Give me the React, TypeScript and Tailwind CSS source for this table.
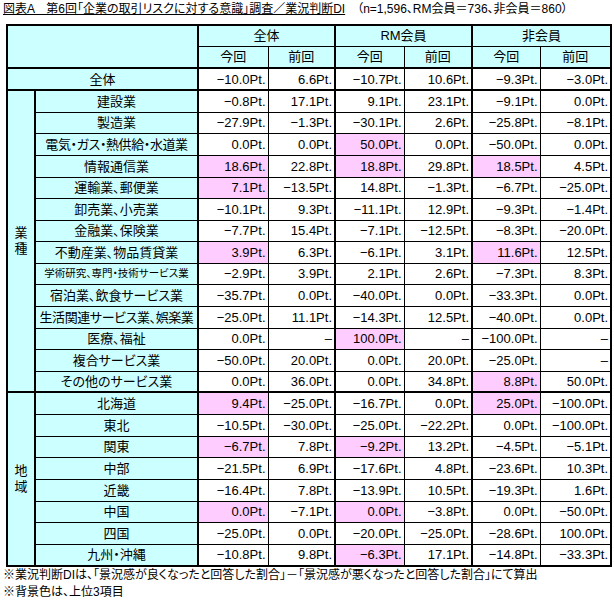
import React from "react";

type Row = { label: string; v: string[]; hl?: number[]; small?: boolean; tight?: boolean };

const industries: Row[] = [
  { label: "建設業", v: ["-0.8", "17.1", "9.1", "23.1", "-9.1", "0.0"] },
  { label: "製造業", v: ["-27.9", "-1.3", "-30.1", "2.6", "-25.8", "-8.1"] },
  { label: "電気・ガス・熱供給・水道業", v: ["0.0", "0.0", "50.0", "0.0", "-50.0", "0.0"], hl: [2], tight: true },
  { label: "情報通信業", v: ["18.6", "22.8", "18.8", "29.8", "18.5", "4.5"], hl: [0, 2, 4] },
  { label: "運輸業、郵便業", v: ["7.1", "-13.5", "14.8", "-1.3", "-6.7", "-25.0"], hl: [0] },
  { label: "卸売業、小売業", v: ["-10.1", "9.3", "-11.1", "12.9", "-9.3", "-1.4"] },
  { label: "金融業、保険業", v: ["-7.7", "15.4", "-7.1", "-12.5", "-8.3", "-20.0"] },
  { label: "不動産業、物品賃貸業", v: ["3.9", "6.3", "-6.1", "3.1", "11.6", "12.5"], hl: [0, 4] },
  { label: "学術研究、専門・技術サービス業", v: ["-2.9", "3.9", "2.1", "2.6", "-7.3", "8.3"], small: true },
  { label: "宿泊業、飲食サービス業", v: ["-35.7", "0.0", "-40.0", "0.0", "-33.3", "0.0"] },
  { label: "生活関連サービス業、娯楽業", v: ["-25.0", "11.1", "-14.3", "12.5", "-40.0", "0.0"], tight: true },
  { label: "医療、福祉", v: ["0.0", "", "100.0", "", "-100.0", ""], hl: [2] },
  { label: "複合サービス業", v: ["-50.0", "20.0", "0.0", "20.0", "-25.0", ""] },
  { label: "その他のサービス業", v: ["0.0", "36.0", "0.0", "34.8", "8.8", "50.0"], hl: [4] },
];

const regions: Row[] = [
  { label: "北海道", v: ["9.4", "-25.0", "-16.7", "0.0", "25.0", "-100.0"], hl: [0, 4] },
  { label: "東北", v: ["-10.5", "-30.0", "-25.0", "-22.2", "0.0", "-100.0"] },
  { label: "関東", v: ["-6.7", "7.8", "-9.2", "13.2", "-4.5", "-5.1"], hl: [0, 2] },
  { label: "中部", v: ["-21.5", "6.9", "-17.6", "4.8", "-23.6", "10.3"] },
  { label: "近畿", v: ["-16.4", "7.8", "-13.9", "10.5", "-19.3", "1.6"] },
  { label: "中国", v: ["0.0", "-7.1", "0.0", "-3.8", "0.0", "-50.0"], hl: [0, 2] },
  { label: "四国", v: ["-25.0", "0.0", "-20.0", "-25.0", "-28.6", "100.0"] },
  { label: "九州・沖縄", v: ["-10.8", "9.8", "-6.3", "17.1", "-14.8", "-33.3"], hl: [2] },
];

const totalRow = ["-10.0", "6.6", "-10.7", "10.6", "-9.3", "-3.0"];

// row heights, px: industry 302 total, region 174 total
const indH = ["h-[22px]", "h-[21px]", "h-[22px]", "h-[22px]", "h-[21px]", "h-[22px]", "h-[21px]", "h-[22px]", "h-[21px]", "h-[22px]", "h-[22px]", "h-[21px]", "h-[22px]", "h-[21px]"];
const regH = ["h-[22px]", "h-[22px]", "h-[21px]", "h-[22px]", "h-[22px]", "h-[21px]", "h-[22px]", "h-[22px]"];

const fmt = (s: string) => (s === "" ? "–" : s.replace("-", "−") + "Pt.");

function Values({ v, hl = [] }: { v: string[]; hl?: number[] }) {
  return (
    <>
      {v.map((s, i) => (
        <td
          key={i}
          className={
            "border border-black text-right pr-[2px] " +
            (i % 2 === 0 ? "border-l-2 " : "") +
            (hl.includes(i) ? "bg-[#ffccff]" : "bg-white")
          }
        >
          {fmt(s)}
        </td>
      ))}
    </>
  );
}

export default function App() {
  return (
    <div className="w-[614px] h-[601px] bg-white text-black font-['Liberation_Sans','Noto_Sans_CJK_JP',sans-serif] [font-feature-settings:'palt'] overflow-hidden">
      <div className="h-[24px] pl-[3px] pt-[1px] text-[12px] leading-[17px] whitespace-nowrap">
        <span className="underline">図表A　第6回「企業の取引リスクに対する意識」調査／業況判断DI</span>
        <span>　（n=1,596、RM会員＝736、非会員＝860）</span>
      </div>

      <table className="ml-[6px] table-fixed border-collapse border-2 border-black text-[13px] leading-none w-[604px]">
        <colgroup>
          <col className="w-[28px]" />
          <col className="w-[163px]" />
          <col className="w-[70px]" />
          <col className="w-[67px]" />
          <col className="w-[69px]" />
          <col className="w-[68px]" />
          <col className="w-[68px]" />
          <col className="w-[71px]" />
        </colgroup>
        <thead>
          <tr className="h-[21px]">
            <th colSpan={2} rowSpan={2} className="bg-[#ccffff] border border-black border-b-2" />
            {["全体", "RM会員", "非会員"].map((h) => (
              <th key={h} colSpan={2} className="bg-[#ccffff] border border-black border-l-2 font-normal">
                {h}
              </th>
            ))}
          </tr>
          <tr className="h-[22px]">
            {[0, 1, 2].map((g) => (
              <React.Fragment key={g}>
                <th className="bg-[#ccffff] border border-black border-l-2 border-b-2 font-normal">今回</th>
                <th className="bg-[#ccffff] border border-black border-b-2 font-normal">前回</th>
              </React.Fragment>
            ))}
          </tr>
        </thead>
        <tbody>
          <tr className="h-[22px] border-b-2 border-black">
            <td colSpan={2} className="bg-[#ccffff] border border-black border-b-2 text-center">
              全体
            </td>
            <Values v={totalRow} />
          </tr>
          {industries.map((r, i) => (
            <tr key={r.label} className={indH[i] + (i === industries.length - 1 ? " border-b-2 border-black" : "")}>
              {i === 0 && (
                <td rowSpan={industries.length} className="bg-[#ccffff] border border-black border-r-2 border-b-2 text-center align-middle leading-[16px]">
                  業<br />種
                </td>
              )}
              <td
                className={
                  "bg-[#ccffff] border border-black text-center whitespace-nowrap overflow-hidden " +
                  (r.small ? "text-[10.5px] " : "") +
                  (r.tight ? "tracking-[-0.4px] " : "") +
                  (i === industries.length - 1 ? "border-b-2" : "")
                }
              >
                {r.label}
              </td>
              <Values v={r.v} hl={r.hl} />
            </tr>
          ))}
          {regions.map((r, i) => (
            <tr key={r.label} className={regH[i]}>
              {i === 0 && (
                <td rowSpan={regions.length} className="bg-[#ccffff] border border-black border-r-2 text-center align-middle leading-[16px]">
                  地<br />域
                </td>
              )}
              <td className="bg-[#ccffff] border border-black text-center whitespace-nowrap">{r.label}</td>
              <Values v={r.v} hl={r.hl} />
            </tr>
          ))}
        </tbody>
      </table>

      <div className="pl-[3px] text-[12px] leading-[17px] whitespace-nowrap">
        <div>※業況判断DIは、「景況感が良くなったと回答した割合」－「景況感が悪くなったと回答した割合」にて算出</div>
        <div>※背景色は、上位3項目</div>
      </div>
    </div>
  );
}
